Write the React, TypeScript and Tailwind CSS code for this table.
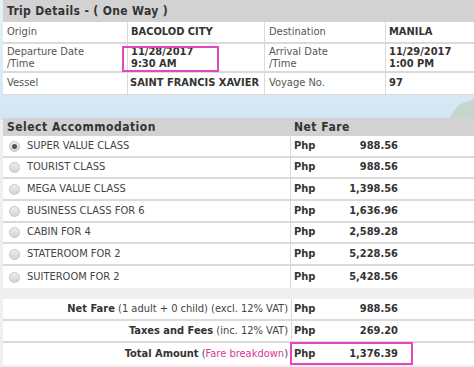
import React from "react";

const font = { fontFamily: '"DejaVu Sans Condensed", "DejaVu Sans", sans-serif' };

const accom = [
  { name: "SUPER VALUE CLASS", fare: "988.56", checked: true, h: "h-[22px]" },
  { name: "TOURIST CLASS", fare: "988.56", h: "h-[21px]" },
  { name: "MEGA VALUE CLASS", fare: "1,398.56", h: "h-[22px]" },
  { name: "BUSINESS CLASS FOR 6", fare: "1,636.96", h: "h-[22px]" },
  { name: "CABIN FOR 4", fare: "2,589.28", h: "h-[21px]" },
  { name: "STATEROOM FOR 2", fare: "5,228.56", h: "h-[22px]" },
  { name: "SUITEROOM FOR 2", fare: "5,428.56", h: "h-[22px]" },
];

function Radio({ checked }: { checked?: boolean }) {
  return (
    <span className="w-[11px] h-[11px] rounded-full border border-[#c4c4c4] bg-gradient-to-b from-[#eeeeee] to-[#d4d4d4] flex items-center justify-center shrink-0">
      {checked && <span className="w-[5px] h-[5px] rounded-full bg-[#555]" />}
    </span>
  );
}

export default function App() {
  return (
    <div
      className="relative w-[474px] h-[367px] overflow-hidden text-[11px] text-[#333] bg-[#efefef]"
      style={font}
    >
      {/* sky background */}
      <div className="absolute left-0 top-0 w-full h-[120px] bg-gradient-to-b from-[#e6f1f7] via-[#dcecf5] to-[#d2e7f3]" />
      <svg className="absolute right-0 top-[98px]" width="24" height="20" viewBox="0 0 24 20">
        <path d="M0 20 C4 12 8 7 13 5 C17 3 21 2 24 1 L24 20 Z" fill="#c3cfc4" opacity="0.8" />
      </svg>

      <div className="relative pl-[3px]">
        {/* Trip details */}
        <div className="bg-[#d2d2d2] h-[22px] flex items-center pl-[4px] font-bold text-[12px] tracking-[0.35px] text-[#333]">
          Trip Details - ( One Way )
        </div>
        <div className="grid grid-cols-[125px_137px_121px_88px] bg-white">
          <div className="h-[22px] flex items-center pl-[4px] text-[#555] border-r border-b-2 border-[#dadada]">Origin</div>
          <div className="h-[22px] flex items-center pl-[3px] font-bold border-r border-b-2 border-[#dadada]">BACOLOD CITY</div>
          <div className="h-[22px] flex items-center pl-[4px] text-[#555] border-r border-b-2 border-[#dadada]">Destination</div>
          <div className="h-[22px] flex items-center pl-[3px] font-bold border-b-2 border-[#dadada]">MANILA</div>

          <div className="h-[29px] flex flex-col justify-center pl-[4px] text-[#555] leading-[12px] border-r border-b-2 border-[#dadada]">
            <span>Departure Date</span>
            <span>/Time</span>
          </div>
          <div className="h-[29px] flex flex-col justify-center pl-[3px] font-bold leading-[12px] border-r border-b-2 border-[#dadada]">
            <span>11/28/2017</span>
            <span>9:30 AM</span>
          </div>
          <div className="h-[29px] flex flex-col justify-center pl-[4px] text-[#555] leading-[12px] border-r border-b-2 border-[#dadada]">
            <span>Arrival Date</span>
            <span>/Time</span>
          </div>
          <div className="h-[29px] flex flex-col justify-center pl-[3px] font-bold leading-[12px] border-b-2 border-[#dadada]">
            <span>11/29/2017</span>
            <span>1:00 PM</span>
          </div>

          <div className="h-[22px] flex items-center pl-[4px] text-[#555] border-r border-b border-[#dadada]">Vessel</div>
          <div className="h-[22px] flex items-center pl-[2px] font-bold border-r border-b border-[#dadada] whitespace-nowrap">SAINT FRANCIS XAVIER</div>
          <div className="h-[22px] flex items-center pl-[4px] text-[#555] border-r border-b border-[#dadada]">Voyage No.</div>
          <div className="h-[22px] flex items-center pl-[3px] font-bold border-b border-[#dadada]">97</div>
        </div>

        <div className="h-[23px]" />

        {/* Accommodation */}
        <div className="grid grid-cols-[288px_183px] bg-[#d2d2d2] h-[18px] font-bold text-[12px] tracking-[0.5px]">
          <div className="flex items-center pl-[4px]">Select Accommodation</div>
          <div className="flex items-center pl-[3px]">Net Fare</div>
        </div>
        <div className="bg-white">
          {accom.map((a, i) => (
            <div
              key={a.name}
              className={`grid grid-cols-[288px_183px] ${a.h} ${i < accom.length - 1 ? "border-b-2" : ""} border-[#dadada]`}
            >
              <div className="flex items-center pl-[6px] gap-[7px] border-r border-[#dadada] text-[#444]">
                <Radio checked={a.checked} />
                <span>{a.name}</span>
              </div>
              <div className="flex items-center">
                <div className="w-[108px] flex justify-between pl-[3px] pr-[1px] font-bold">
                  <span>Php</span>
                  <span>{a.fare}</span>
                </div>
              </div>
            </div>
          ))}
        </div>

        <div className="h-[11px]" />

        {/* Summary */}
        <div className="bg-white">
          <div className="grid grid-cols-[289px_182px] h-[22px] border-b-2 border-[#dadada]">
            <div className="flex items-center justify-end pr-[3px] border-r border-[#dadada] whitespace-nowrap text-[#444]">
              <b className="text-[#333]">Net Fare</b>&nbsp;(1 adult + 0 child) (excl. 12% VAT)
            </div>
            <div className="flex items-center">
              <div className="w-[108px] flex justify-between pl-[2px] pr-[2px] font-bold">
                <span>Php</span>
                <span>988.56</span>
              </div>
            </div>
          </div>
          <div className="grid grid-cols-[289px_182px] h-[22px] border-b-2 border-[#dadada]">
            <div className="flex items-center justify-end pr-[3px] border-r border-[#dadada] whitespace-nowrap text-[#444]">
              <b className="text-[#333]">Taxes and Fees</b>&nbsp;(inc. 12% VAT)
            </div>
            <div className="flex items-center">
              <div className="w-[108px] flex justify-between pl-[2px] pr-[2px] font-bold">
                <span>Php</span>
                <span>269.20</span>
              </div>
            </div>
          </div>
          <div className="grid grid-cols-[289px_182px] h-[22px]">
            <div className="flex items-center justify-end pr-[3px] border-r border-[#dadada] whitespace-nowrap text-[#444]">
              <b className="text-[#333]">Total Amount</b>&nbsp;(<span className="text-[#e0329b]">Fare breakdown</span>)
            </div>
            <div className="flex items-center">
              <div className="w-[108px] flex justify-between pl-[2px] pr-[2px] font-bold">
                <span>Php</span>
                <span>1,376.39</span>
              </div>
            </div>
          </div>
        </div>
      </div>

      {/* annotation boxes */}
      <div className="absolute left-[122px] top-[46px] w-[97px] h-[26px] border-2 border-[#e246c0]" />
      <div className="absolute left-[290px] top-[342px] w-[123px] h-[23px] border-2 border-[#e246c0]" />
    </div>
  );
}
